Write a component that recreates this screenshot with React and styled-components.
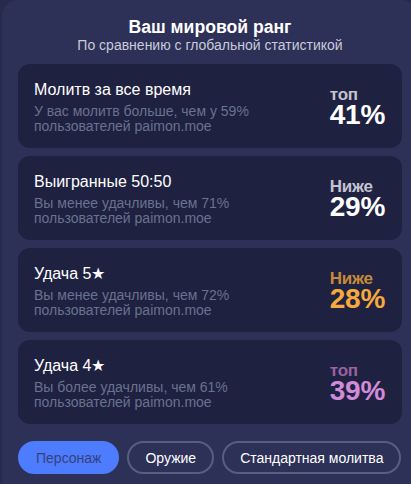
import React from "react";
import styled, { createGlobalStyle } from "styled-components";

const Global = createGlobalStyle`
  html, body { margin: 0; padding: 0; background: #282a4d; overflow: hidden; }
  body { font-family: "Liberation Sans", Arial, sans-serif; }
`;

const Panel = styled.section`
  margin-left: 2px;
  width: 416px;
  min-height: 500px;
  box-sizing: border-box;
  background: #2d3057;
  border-radius: 16px;
  padding: 17px 16px 0 16px;
  display: flex;
  flex-direction: column;
`;

const Header = styled.header`
  text-align: center;
  width: 384px;
  margin-bottom: 11px;
`;

const Title = styled.h2`
  margin: 0;
  font-size: 17.6px;
  line-height: 20px;
  font-weight: 700;
  color: #ffffff;
`;

const Subtitle = styled.p`
  margin: 0;
  font-size: 14px;
  line-height: 16px;
  color: #c9cbdb;
`;

const List = styled.div`
  display: flex;
  flex-direction: column;
  gap: 8px;
  width: 384px;
`;

const Card = styled.div`
  height: 84px;
  box-sizing: border-box;
  background: #1f2141;
  border-radius: 12px;
  padding: 2px 17px 0 16px;
  display: flex;
  align-items: center;
  justify-content: space-between;
`;

const Info = styled.div`
  display: flex;
  flex-direction: column;
`;

const CardTitle = styled.div`
  font-size: 16px;
  line-height: 18px;
  color: #ffffff;
  margin-bottom: 5px;
`;

const CardText = styled.div`
  font-size: 14px;
  line-height: 15px;
  color: #69728f;
  width: 230px;
`;

const Rank = styled.div`
  display: flex;
  flex-direction: column;
  align-items: flex-start;
  color: ${(p) => p.$color};
`;

const RankLabel = styled.span`
  font-size: 17px;
  line-height: 14px;
  font-weight: 700;
  color: ${(p) => p.$color};
  letter-spacing: -0.3px;
`;

const RankValue = styled.span`
  font-size: 28px;
  line-height: 25px;
  font-weight: 700;
  letter-spacing: -0.3px;
`;

const Tabs = styled.div`
  display: flex;
  gap: 8px;
  margin-top: 17px;
`;

const Tab = styled.button`
  height: 33px;
  box-sizing: border-box;
  flex-shrink: 0;
  white-space: nowrap;
  border-radius: 999px;
  border: 2px solid ${(p) => (p.$active ? "#4d7cfe" : "#5a5d82")};
  background: ${(p) => (p.$active ? "#4d7cfe" : "transparent")};
  color: ${(p) => (p.$active ? "#34427a" : "#ffffff")};
  font-family: "Liberation Sans", Arial, sans-serif;
  font-size: 14px;
  padding: 0 16px;
  cursor: pointer;
`;

const stats = [
  {
    title: "Молитв за все время",
    text: "У вас молитв больше, чем у 59% пользователей paimon.moe",
    label: "топ",
    value: "41%",
    color: "#ffffff",
    labelColor: "#c3c4cf",
  },
  {
    title: "Выигранные 50:50",
    text: "Вы менее удачливы, чем 71% пользователей paimon.moe",
    label: "Ниже",
    value: "29%",
    color: "#ffffff",
    labelColor: "#c3c4cf",
  },
  {
    title: "Удача 5★",
    text: "Вы менее удачливы, чем 72% пользователей paimon.moe",
    label: "Ниже",
    value: "28%",
    color: "#f6a93c",
    labelColor: "#c68a39",
  },
  {
    title: "Удача 4★",
    text: "Вы более удачливы, чем 61% пользователей paimon.moe",
    label: "топ",
    value: "39%",
    color: "#d28bd9",
    labelColor: "#9b61a1",
  },
];

export default function App() {
  return (
    <>
      <Global />
      <Panel>
        <Header>
          <Title>Ваш мировой ранг</Title>
          <Subtitle>По сравнению с глобальной статистикой</Subtitle>
        </Header>
        <List>
          {stats.map((s) => (
            <Card key={s.title}>
              <Info>
                <CardTitle>{s.title}</CardTitle>
                <CardText>{s.text}</CardText>
              </Info>
              <Rank $color={s.color}>
                <RankLabel $color={s.labelColor}>{s.label}</RankLabel>
                <RankValue>{s.value}</RankValue>
              </Rank>
            </Card>
          ))}
        </List>
        <Tabs>
          <Tab $active>Персонаж</Tab>
          <Tab>Оружие</Tab>
          <Tab>Стандартная молитва</Tab>
        </Tabs>
      </Panel>
    </>
  );
}
